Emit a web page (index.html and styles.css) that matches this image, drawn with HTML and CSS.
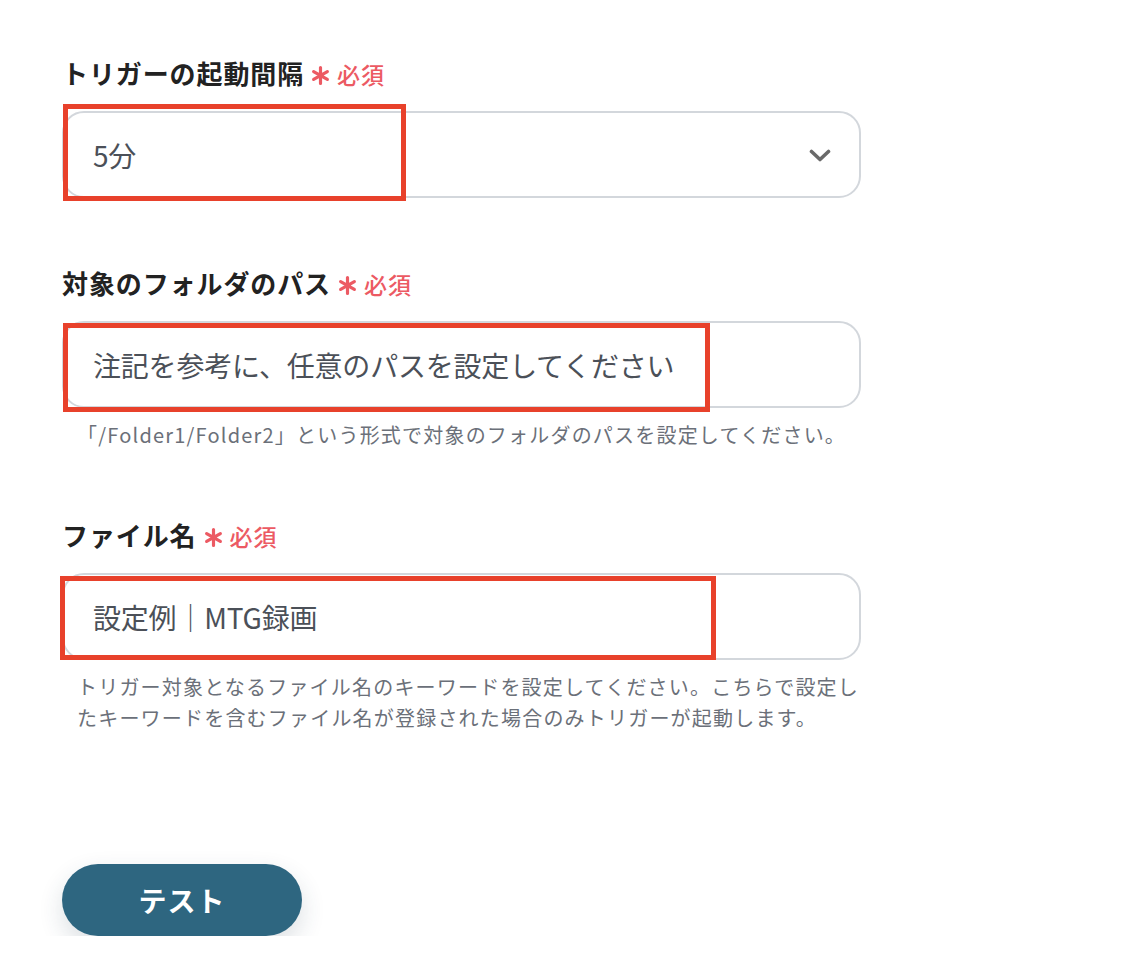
FILE: index.html
```html
<!DOCTYPE html>
<html lang="ja">
<head>
<meta charset="utf-8">
<title>トリガー設定</title>
<link rel="stylesheet" href="styles.css">
</head>
<body>
<main class="form">
  <section class="field-group">
    <div class="label-row">
      <span class="label">トリガーの起動間隔</span>
      <svg class="asterisk" viewBox="0 0 18 18" width="18" height="18"><path d="M9 1.5v15M2.5 5.25l13 7.5M2.5 12.75l13-7.5" /></svg>
      <span class="required">必須</span>
    </div>
    <div class="field-wrap">
      <div class="field select">
        <span class="value">5分</span>
        <svg class="chevron" viewBox="0 0 22 14" width="22" height="14"><path d="M2.5 2.5 11 10.5 19.5 2.5" /></svg>
      </div>
      <div class="highlight hl-1"></div>
    </div>
  </section>

  <section class="field-group">
    <div class="label-row">
      <span class="label">対象のフォルダのパス</span>
      <svg class="asterisk" viewBox="0 0 18 18" width="18" height="18"><path d="M9 1.5v15M2.5 5.25l13 7.5M2.5 12.75l13-7.5" /></svg>
      <span class="required">必須</span>
    </div>
    <div class="field-wrap">
      <div class="field">
        <span class="value">注記を参考に、任意のパスを設定してください</span>
      </div>
      <div class="highlight hl-2"></div>
    </div>
    <p class="help">「/Folder1/Folder2」という形式で対象のフォルダのパスを設定してください。</p>
  </section>

  <section class="field-group">
    <div class="label-row">
      <span class="label">ファイル名</span>
      <svg class="asterisk" viewBox="0 0 18 18" width="18" height="18"><path d="M9 1.5v15M2.5 5.25l13 7.5M2.5 12.75l13-7.5" /></svg>
      <span class="required">必須</span>
    </div>
    <div class="field-wrap">
      <div class="field">
        <span class="value">設定例｜MTG録画</span>
      </div>
      <div class="highlight hl-3"></div>
    </div>
    <p class="help">トリガー対象となるファイル名のキーワードを設定してください。こちらで設定したキーワードを含むファイル名が登録された場合のみトリガーが起動します。</p>
  </section>

  <button class="test-button" type="button">テスト</button>
</main>
</body>
</html>
```

FILE: styles.css
```css
* {
  box-sizing: border-box;
}

html, body {
  margin: 0;
  padding: 0;
  background: #ffffff;
}

body {
  font-family: "Noto Sans CJK JP", "Noto Sans", "Liberation Sans", sans-serif;
  color: #222222;
}

.form {
  width: 1146px;
  padding: 55px 0 0 62px;
  display: flex;
  flex-direction: column;
  align-items: flex-start;
}

.field-group {
  width: 799px;
  margin-bottom: 67px;
}

.label-row {
  display: flex;
  align-items: center;
  height: 36px;
  margin-bottom: 20px;
}

.label {
  font-size: 26px;
  font-weight: 700;
  line-height: 36px;
  letter-spacing: 0.9px;
  color: #222222;
}

.asterisk {
  width: 19px;
  height: 19px;
  margin: 5px 7px 0 7px;
  stroke: #ec5a63;
  stroke-width: 3;
  stroke-linecap: round;
  fill: none;
}

.required {
  font-size: 23px;
  font-weight: 500;
  color: #ec5a63;
  line-height: 36px;
  letter-spacing: 1px;
  margin-top: 2px;
}

.field-wrap {
  position: relative;
  width: 799px;
}

.field {
  height: 87px;
  border: 2px solid #d3d7dc;
  border-radius: 22px;
  background: #ffffff;
  display: flex;
  align-items: center;
  padding: 0 28px 0 29px;
}

.value {
  font-size: 28px;
  letter-spacing: -0.2px;
  color: #4b5058;
  line-height: 1;
  flex: 1;
}

.chevron {
  fill: none;
  stroke: #6a6a6a;
  stroke-width: 3.6;
  stroke-linecap: round;
  stroke-linejoin: round;
  margin-top: 3px;
}

.highlight {
  position: absolute;
  border: 5px solid #e8412b;
  pointer-events: none;
}

.hl-1 {
  left: 1px;
  top: -7px;
  width: 343px;
  height: 97px;
}

.hl-2 {
  left: 1px;
  top: 2px;
  width: 647px;
  height: 89px;
}

.hl-3 {
  left: -2px;
  top: 3px;
  width: 656px;
  height: 84px;
}

.help {
  margin: 11px 0 0 0;
  padding: 0 0 0 15px;
  font-size: 20px;
  line-height: 31px;
  color: #6b7079;
  letter-spacing: 1.2px;
}

.test-button {
  margin-top: 64px;
  width: 240px;
  height: 72px;
  border: none;
  border-radius: 36px;
  background: #2e6680;
  color: #ffffff;
  font-family: "Noto Sans CJK JP", "Noto Sans", sans-serif;
  font-size: 28px;
  font-weight: 700;
  letter-spacing: 1px;
  box-shadow: 0 10px 24px rgba(40, 60, 80, 0.16);
  cursor: pointer;
}
```
